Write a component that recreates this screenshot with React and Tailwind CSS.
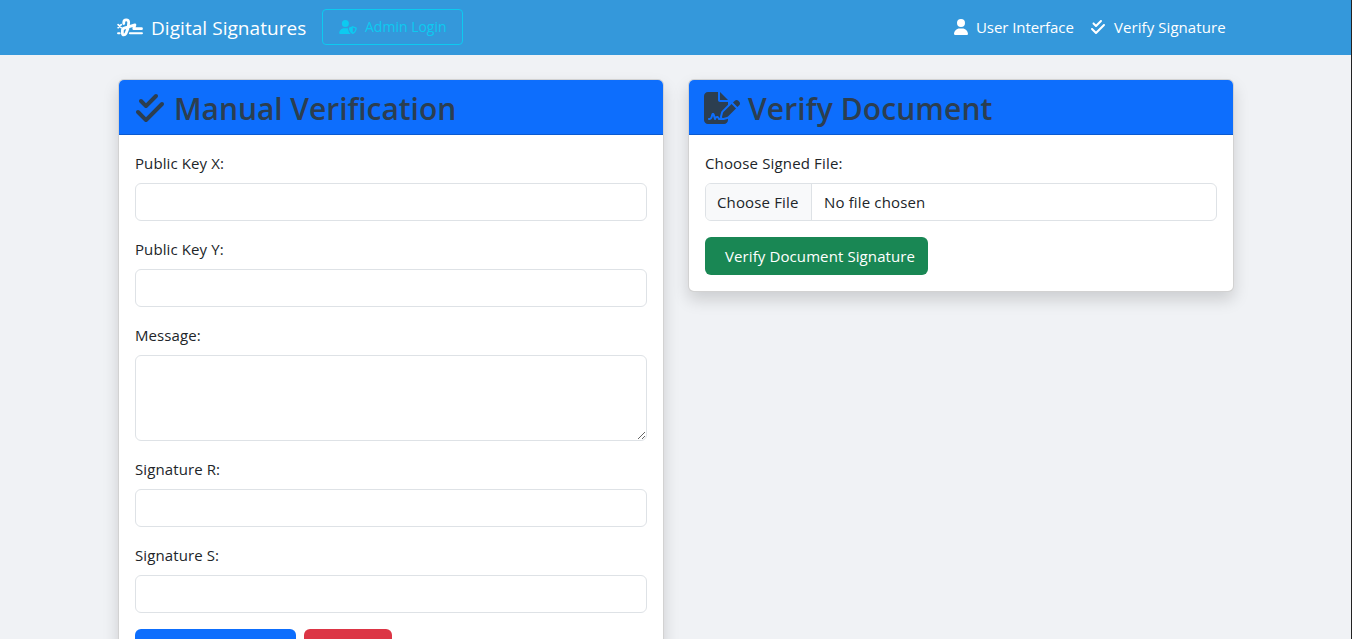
import React from "react";
import {
  FaUserShield,
  FaUser,
  FaCheckDouble,
  FaFileSignature,
} from "react-icons/fa6";

function SignatureIcon({ className }) {
  return (
    <svg
      viewBox="0 0 640 512"
      fill="none"
      stroke="currentColor"
      strokeLinecap="round"
      strokeLinejoin="round"
      className={className}
      aria-hidden="true"
    >
      <path
        strokeWidth="68"
        d="M166 160v-28c0-37 26-64 60-64s62 27 62 64c0 100-22 190-68 272-12 21-26 34-48 34-24 0-40-18-40-42v-62c0-32 18-54 46-62l264-80-30 92h192"
      />
      <path strokeWidth="42" d="M28 186l76 76M104 186l-76 76" />
      <path strokeWidth="50" d="M26 396h38M318 396h296" />
    </svg>
  );
}

function Navbar() {
  return (
    <nav className="flex h-[55px] items-center bg-[#3498db] pl-[117px] pr-[125px] text-white">
      <a className="flex items-center whitespace-nowrap text-[19px] leading-[30px]">
        <SignatureIcon className="mb-px mr-2 h-[21px] w-[26px]" />
        <span className="w-[155px] tracking-[0.05px]">Digital Signatures</span>
      </a>
      <a className="mb-0.5 ml-4 flex h-9 w-[141px] items-center whitespace-nowrap rounded-[4px] border border-[#0dcaf0] pl-4 text-[14px] text-[#0dcaf0]">
        <FaUserShield className="mr-2 h-[14px] w-[18px]" />
        <span>Admin Login</span>
      </a>
      <div className="ml-auto flex items-center whitespace-nowrap text-[15px]">
        <a className="flex items-center">
          <FaUser className="mb-0.5 mr-[7px] h-4 w-4" />
          <span className="w-[98px] tracking-[-0.07px]">User Interface</span>
        </a>
        <a className="ml-4 flex items-center">
          <FaCheckDouble className="mb-0.5 mr-2 h-4 w-4" />
          <span className="w-[112px] tracking-[0.07px]">Verify Signature</span>
        </a>
      </div>
    </nav>
  );
}

function Card({ icon, title, children }) {
  return (
    <section className="w-[546px] shrink-0 rounded-[6px] border border-black/[0.176] bg-white shadow-[0_8px_16px_rgba(0,0,0,0.15)]">
      <header className="flex h-[55px] items-center whitespace-nowrap rounded-t-[5px] border-b border-black/[0.176] bg-[#0d6efd] px-4 text-[#2c3e50]">
        {icon}
        {title}
      </header>
      <div className="p-4">{children}</div>
    </section>
  );
}

function Field({ label, multiline }) {
  return (
    <div className="mb-4">
      <label className="mb-2 block h-6 text-[15px] leading-6 tracking-[0.1px]">{label}</label>
      {multiline ? (
        <textarea className="block h-[86px] w-full resize rounded-[6px] border border-[#dee2e6] bg-white px-3 py-1.5" />
      ) : (
        <input className="block h-[38px] w-full rounded-[6px] border border-[#dee2e6] bg-white px-3 py-1.5" />
      )}
    </div>
  );
}

export default function App() {
  return (
    <div className="h-[639px] overflow-hidden border-r border-[#222222] bg-[#f0f2f5] font-['Open_Sans','Noto_Sans',sans-serif] text-[15px] text-[#212529]">
      <Navbar />
      <main className="flex items-start gap-6 pl-[118px] pt-6">
        <Card
          icon={<FaCheckDouble className="-ml-px mr-2 mt-0.5 h-8 w-8" />}
          title={<h2 className="pt-1 text-[30px] font-semibold leading-[38px] tracking-[-0.05px]">Manual Verification</h2>}
        >
          <Field label="Public Key X:" />
          <Field label="Public Key Y:" />
          <Field label="Message:" multiline />
          <Field label="Signature R:" />
          <Field label="Signature S:" />
          <div className="flex gap-2">
            <button className="h-[38px] w-[161px] rounded-[6px] bg-[#0d6efd]" />
            <button className="h-[38px] w-[88px] rounded-[6px] bg-[#dc3545]" />
          </div>
        </Card>
        <Card
          icon={<FaFileSignature className="-ml-px mr-2 mt-px h-8 w-9" />}
          title={<h2 className="pt-1 text-[30px] font-semibold leading-[38px] tracking-[0.1px]">Verify Document</h2>}
        >
          <label className="mb-2 block h-6 leading-6 tracking-[0.15px]">Choose Signed File:</label>
          <div className="mb-4 flex h-[38px] overflow-hidden rounded-[6px] border border-[#dee2e6]">
            <span className="flex w-[106px] items-center whitespace-nowrap border-r border-[#dee2e6] bg-[#f8f9fa] pl-[11px] tracking-[0.15px]">
              Choose File
            </span>
            <span className="flex items-center pl-3 tracking-[0.15px]">No file chosen</span>
          </div>
          <button className="flex h-[38px] w-[223px] items-center whitespace-nowrap rounded-[6px] bg-[#198754] pl-5 tracking-[0.1px] text-white">
            Verify Document Signature
          </button>
        </Card>
      </main>
    </div>
  );
}
